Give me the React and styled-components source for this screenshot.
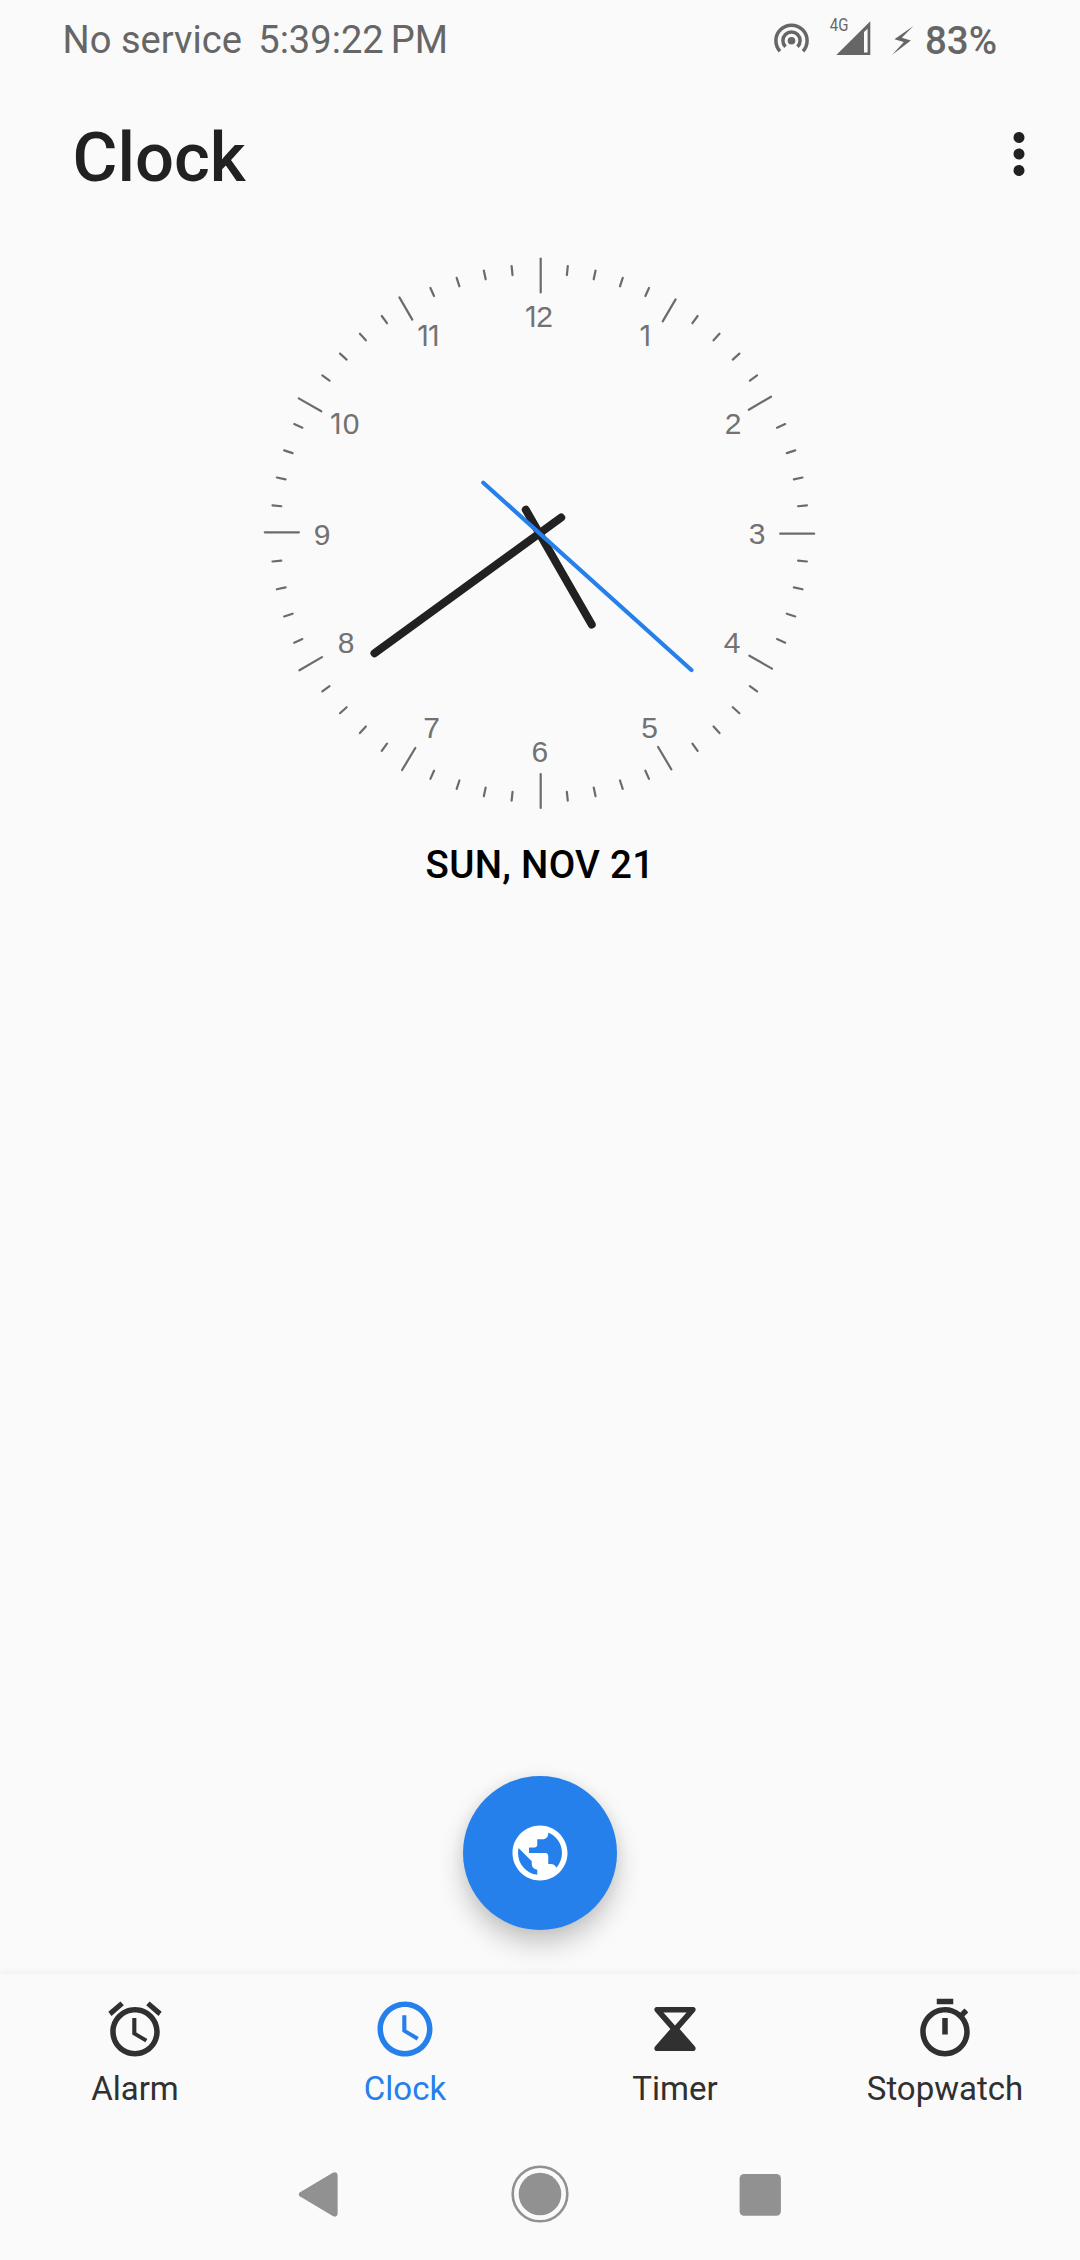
import React from "react";
import styled, { createGlobalStyle } from "styled-components";

const GlobalStyle = createGlobalStyle`
  *, *::before, *::after { box-sizing: border-box; }
  body { margin: 0; background: #fafafa; }
  button { border: 0; padding: 0; background: none; font: inherit; color: inherit; }
  svg { display: block; flex: none; }
`;

const Screen = styled.div`
  width: 1080px;
  height: 2260px;
  display: flex;
  flex-direction: column;
  overflow: hidden;
  background: #fafafa;
  color: #212121;
  font-family: Roboto, "Liberation Sans", sans-serif;
`;

const StatusBar = styled.div`
  display: flex;
  justify-content: space-between;
  align-items: center;
  height: 77px;
  padding: 2px 83px 0 62.6px;
  color: #666;
  font-size: 38.1px;
  line-height: 46px;
  white-space: pre;
`;

const StatusGroup = styled.div`
  display: flex;
  align-items: center;
  gap: ${(p) => p.$gap}px;
`;

const Time = styled.span`
  word-spacing: -2.5px;
`;

const Battery = styled.span`
  font-size: 38.5px;
  font-weight: 500;
  padding-top: 2px;
`;

const Toolbar = styled.header`
  display: flex;
  align-items: center;
  justify-content: space-between;
  height: 154px;
  padding: 0 28px 0 72.5px;
`;

const Title = styled.h1`
  margin: 0;
  padding-top: 7px;
  font-size: 68.75px;
  line-height: 80px;
  font-weight: 500;
`;

const Content = styled.main`
  flex: 1;
  display: flex;
  flex-direction: column;
  align-items: center;
`;

const Dial = styled.svg`
  margin-top: 9px;
`;

const Numeral = styled.text`
  font-family: ${(p) => (p.$one ? "Inter" : '"Liberation Sans"')}, sans-serif;
  font-size: ${(p) => (p.$one ? 28.5 : 30)}px;
  font-weight: 400;
  fill: #727272;
  text-anchor: middle;
`;

const DateLabel = styled.div`
  margin-top: 2px;
  font-size: 38.5px;
  line-height: 46px;
  font-weight: 500;
  letter-spacing: 0.3px;
  color: #000;
`;

const Fab = styled.button`
  display: flex;
  align-items: center;
  justify-content: center;
  width: 154px;
  height: 154px;
  margin: auto 0 44px;
  border-radius: 50%;
  background: #2680eb;
  color: #fff;
  box-shadow: 0 14px 26px rgba(0, 0, 0, 0.21), 0 0 14px rgba(0, 0, 0, 0.06);
`;

const TabBar = styled.nav`
  display: grid;
  grid-template-columns: repeat(4, 1fr);
  height: 154px;
  background: #fafafa;
  box-shadow: 0 -1px 8px rgba(0, 0, 0, 0.06);
  clip-path: inset(-14px 0 0 0);
`;

const Tab = styled.button`
  display: flex;
  flex-direction: column;
  align-items: center;
  padding-top: 22px;
  color: ${(p) => (p.$active ? "#2680eb" : "#303030")};
`;

const TabLabel = styled.span`
  margin-top: 7px;
  font-size: 33px;
  line-height: 40px;
`;

const SystemNav = styled.div`
  display: flex;
  justify-content: center;
  align-items: center;
  gap: 154px;
  height: 132px;
  color: #919191;
`;

const NavButton = styled.button`
  display: flex;
`;

const Icon = ({ d, size = 66 }) => (
  <svg width={size} height={size} viewBox="0 0 24 24" fill="currentColor">
    <path d={d} />
  </svg>
);

const ICONS = {
  more: "M12 8c1.1 0 2-.9 2-2s-.9-2-2-2-2 .9-2 2 .9 2 2 2zm0 2c-1.1 0-2 .9-2 2s.9 2 2 2 2-.9 2-2-.9-2-2-2zm0 6c-1.1 0-2 .9-2 2s.9 2 2 2 2-.9 2-2-.9-2-2-2z",
  globe:
    "M12 2C6.48 2 2 6.48 2 12s4.48 10 10 10 10-4.48 10-10S17.52 2 12 2zm-1 17.93c-3.95-.49-7-3.85-7-7.93 0-.62.08-1.21.21-1.79L9 15v1c0 1.1.9 2 2 2v1.93zm6.9-2.54c-.26-.81-1-1.39-1.9-1.39h-1v-3c0-.55-.45-1-1-1H8v-2h2c.55 0 1-.45 1-1V7h2c1.1 0 2-.9 2-2v-.41c2.93 1.19 5 4.06 5 7.41 0 2.08-.8 3.97-2.1 5.39z",
  alarm:
    "M21.7 5.72l-4.4-3.76-1.24 1.43 4.5 3.86L21.7 5.72zM7.94 3.39L6.7 1.96 2.3 5.71l1.14 1.53 4.5-3.85zM12.5 8H11v6l4.75 2.85.75-1.23-4-2.37V8zM12 4c-4.97 0-9 4.03-9 9s4.02 9 9 9c4.97 0 9-4.03 9-9s-4.03-9-9-9zm0 16c-3.87 0-7-3.13-7-7s3.13-7 7-7 7 3.13 7 7-3.13 7-7 7z",
  clock:
    "M11.99 2C6.47 2 2 6.48 2 12s4.47 10 9.99 10C17.52 22 22 17.52 22 12S17.52 2 11.99 2zM12 20c-4.42 0-8-3.58-8-8s3.58-8 8-8 8 3.58 8 8-3.58 8-8 8zM12.5 7H11v6l5.25 3.15.75-1.23-4.5-2.67z",
  timer:
    "M5.4 4h13.2c.85 0 1.2 1 .65 1.65L13.7 12l5.55 6.35c.55.65.2 1.65-.65 1.65H5.4c-.85 0-1.2-1-.65-1.65L10.3 12 4.75 5.65C4.2 5 4.55 4 5.4 4zM7.8 6l4.2 4.7L16.2 6z",
  stopwatch:
    "M15 1H9v2h6V1zm-4 13h2V8h-2v6zm8.03-6.61l1.42-1.42c-.43-.51-.9-.99-1.41-1.41l-1.42 1.42C16.07 4.74 14.12 4 12 4c-4.97 0-9 4.03-9 9s4.02 9 9 9 9-4.03 9-9c0-2.12-.74-4.07-1.97-5.61zM12 20c-3.87 0-7-3.13-7-7s3.13-7 7-7 7 3.13 7 7-3.13 7-7 7z",
};

const HotspotIcon = () => (
  <svg width="35" height="36" viewBox="0 0 35 36" fill="none" stroke="currentColor" strokeWidth="3.5">
    <circle cx="17.5" cy="18.8" r="3.8" fill="currentColor" stroke="none" />
    <path d="M11.5 24.8A8.6 8.6 0 1 1 23.5 24.8" />
    <path d="M6 29.3A15.6 15.6 0 1 1 29 29.3" />
  </svg>
);

const SignalIcon = () => (
  <svg width="43" height="54" viewBox="0 -4 43 54" fill="currentColor">
    <text x="0.8" y="14.2" fontSize="18.5" textLength="18.6" lengthAdjust="spacingAndGlyphs">
      4G
    </text>
    <path fillRule="evenodd" d="M7.3 38L41.3 4.2V38zM35 15L38.6 11.8V35.4H35z" />
  </svg>
);

const BoltIcon = () => (
  <svg width="22" height="30" viewBox="0 0 22 30" fill="currentColor">
    <path d="M21.4 1L2.4 14.2 11.8 17 0 30 18.9 15.6 9.8 12.7z" />
  </svg>
);

/* Hour marks as [x1, y1, x2, y2] in dial coordinates. */
const HOUR_MARKS = [
  [300.7, 18.6, 300.7, 52.4],
  [435.6, 59.4, 422.7, 81.4],
  [531, 156.7, 508.8, 169.8],
  [540.2, 293.7, 574.2, 293.7],
  [509.4, 415.7, 532, 428.6],
  [418.1, 507, 431.3, 529.3],
  [300.7, 534, 300.7, 568],
  [162.1, 530, 175.3, 508],
  [59.4, 430.3, 82, 417.1],
  [24.8, 292.3, 58.9, 292.3],
  [58.7, 158.4, 81.3, 171.3],
  [159.4, 57.4, 172.3, 79.6],
];

/* Digits as [digit, x, y]; two-digit numerals are set tight, digit by digit. */
const NUMERALS = [
  ["1", 290.7, 86.5],
  ["2", 304.7, 86.5],
  ["1", 405.3, 106],
  ["2", 493, 194],
  ["3", 517.2, 304.2],
  ["4", 492, 413.4],
  ["5", 409.5, 497.8],
  ["6", 299.9, 522],
  ["7", 191.5, 497.8],
  ["8", 106.2, 413.4],
  ["9", 82.1, 305.2],
  ["1", 95.8, 194],
  ["0", 111.1, 194],
  ["1", 183, 106],
  ["1", 193.8, 106],
];

const MINUTES = Array.from({ length: 60 }, (_, i) => i).filter((i) => i % 5 !== 0);

const minuteMark = (i) => {
  const a = (i * Math.PI) / 30;
  const sx = Math.sin(a);
  const sy = -Math.cos(a);
  return { x1: 299.7 + 259.8 * sx, y1: 293.4 + 259.8 * sy, x2: 299.7 + 268.7 * sx, y2: 293.4 + 268.7 * sy };
};

const AnalogClock = () => (
  <Dial width="600" height="600" viewBox="0 0 600 600">
    <g stroke="#6b6b6b" strokeWidth="2.2" strokeLinecap="round">
      {HOUR_MARKS.map(([x1, y1, x2, y2], i) => (
        <line key={i} x1={x1} y1={y1} x2={x2} y2={y2} />
      ))}
      {MINUTES.map((i) => (
        <line key={i} {...minuteMark(i)} />
      ))}
    </g>
    {NUMERALS.map(([n, x, y]) => (
      <Numeral key={`${n}-${x}`} x={x} y={y} $one={n === "1"}>
        {n}
      </Numeral>
    ))}
    <g strokeLinecap="round">
      <line x1="285.8" y1="269.8" x2="351.7" y2="384.6" stroke="#212121" strokeWidth="8" />
      <line x1="321.2" y1="277.6" x2="134.5" y2="413.2" stroke="#212121" strokeWidth="8" />
      <line x1="243.3" y1="242.7" x2="451.4" y2="430" stroke="#2680eb" strokeWidth="4.2" />
    </g>
  </Dial>
);

const TABS = [
  { id: "alarm", label: "Alarm" },
  { id: "clock", label: "Clock", active: true },
  { id: "timer", label: "Timer" },
  { id: "stopwatch", label: "Stopwatch" },
];

export default function App() {
  return (
    <Screen>
      <GlobalStyle />
      <StatusBar>
        <StatusGroup $gap={16.4}>
          <span>No service</span>
          <Time>5:39:22 PM</Time>
        </StatusGroup>
        <StatusGroup $gap={11}>
          <StatusGroup $gap={20}>
            <HotspotIcon />
            <SignalIcon />
            <BoltIcon />
          </StatusGroup>
          <Battery>83%</Battery>
        </StatusGroup>
      </StatusBar>
      <Toolbar>
        <Title>Clock</Title>
        <NavButton aria-label="More options">
          <Icon d={ICONS.more} />
        </NavButton>
      </Toolbar>
      <Content>
        <AnalogClock />
        <DateLabel>SUN, NOV 21</DateLabel>
        <Fab aria-label="World clock">
          <Icon d={ICONS.globe} />
        </Fab>
      </Content>
      <TabBar>
        {TABS.map((t) => (
          <Tab key={t.id} $active={t.active}>
            <Icon d={ICONS[t.id]} />
            <TabLabel>{t.label}</TabLabel>
          </Tab>
        ))}
      </TabBar>
      <SystemNav>
        <NavButton aria-label="Back">
          <svg width="66" height="66" viewBox="0 0 66 66" fill="currentColor">
            <path d="M12.7 31.6L45.8 11.8Q50.1 9.8 50.6 14V52.6Q50.1 57 45.8 55L12.7 35.2Q10.7 33.4 12.7 31.6z" />
          </svg>
        </NavButton>
        <NavButton aria-label="Home">
          <svg width="66" height="66" viewBox="0 0 66 66" fill="currentColor">
            <circle cx="33" cy="33" r="21.3" />
            <circle cx="33" cy="33" r="27.3" fill="none" stroke="currentColor" strokeWidth="2.6" />
          </svg>
        </NavButton>
        <NavButton aria-label="Recents">
          <svg width="66" height="66" viewBox="0 0 66 66" fill="currentColor">
            <rect x="12.6" y="13" width="41.3" height="41.7" rx="4.5" />
          </svg>
        </NavButton>
      </SystemNav>
    </Screen>
  );
}
